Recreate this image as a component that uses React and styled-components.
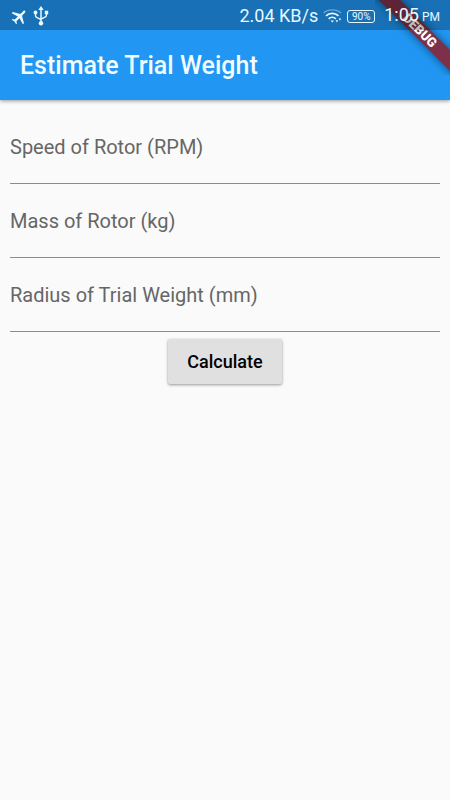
import { useState } from "react";
import styled, { createGlobalStyle, ThemeProvider } from "styled-components";
import { MdAirplanemodeActive } from "react-icons/md";

const theme = {
  primary: "#2196f3",
  background: "#fafafa",
  label: "#666666",
  line: "#8c8c8c",
  button: "#e0e0e0",
  status: "#e6faff",
};

const GlobalStyle = createGlobalStyle`
  * {
    box-sizing: border-box;
  }
  body {
    margin: 0;
    background: ${theme.background};
    font-family: Roboto, "Liberation Sans", sans-serif;
  }
`;

const Page = styled.div`
  min-height: 100vh;
  background: ${(props) => props.theme.background};
`;

// app bar, it reaches up behind the status bar
const Header = styled.header`
  position: relative;
  background: ${(props) => props.theme.primary};
  box-shadow: 0 1px 4px rgba(0, 0, 0, 0.4);
`;

const StatusBar = styled.div`
  position: relative;
  z-index: 2;
  display: flex;
  align-items: center;
  justify-content: space-between;
  height: 30px;
  padding: 2px 10px 0;
  color: ${(props) => props.theme.status};
  background: rgba(0, 0, 0, 0.25);
`;

const StatusGroup = styled.div`
  display: flex;
  align-items: center;
  gap: ${(props) => props.$gap}px;
`;

const StatusText = styled.span`
  font-size: 18px;
  line-height: 22px;
  white-space: nowrap;
`;

const Clock = styled(StatusText)`
  margin-left: 4px;
`;

const Meridiem = styled.span`
  margin-left: 3px;
  font-size: 12px;
`;

const PlaneIcon = styled(MdAirplanemodeActive)`
  transform: rotate(45deg);
`;

const Battery = styled.span`
  width: 28px;
  border: 1px solid currentColor;
  border-radius: 3px;
  font-size: 10px;
  line-height: 11px;
  text-align: center;
`;

const Title = styled.h1`
  margin: 0;
  padding: 20px;
  color: #f0fcff;
  font-size: 25px;
  font-weight: 500;
  line-height: 30px;
  padding-top: 21px;
  padding-bottom: 19px;
`;

const BannerCorner = styled.div`
  position: absolute;
  top: 0;
  right: 0;
  z-index: 1;
  width: 75px;
  height: 75px;
  overflow: hidden;
  pointer-events: none;
`;

const Banner = styled.div`
  position: absolute;
  top: 23px;
  left: -15px;
  width: 120px;
  height: 15px;
  color: white;
  background: #7d3049;
  box-shadow: 0 0 8px rgba(0, 0, 0, 0.5);
  font-size: 13px;
  font-weight: 900;
  line-height: 15px;
  text-align: center;
  transform: rotate(45deg);
`;

const Form = styled.form`
  display: flex;
  flex-direction: column;
  padding: 10px;
`;

const Field = styled.div`
  display: grid;
  height: 74px;
`;

const Input = styled.input`
  grid-area: 1 / 1;
  width: 100%;
  padding: 12px 0 0;
  border: none;
  border-bottom: 1px solid ${(props) => props.theme.line};
  border-radius: 0;
  outline: none;
  background: transparent;
  font-family: inherit;
  font-size: 20px;
  &:focus {
    border-color: ${(props) => props.theme.primary};
  }
`;

// the label moves up as soon as the field is in use
const Label = styled.label`
  grid-area: 1 / 1;
  align-self: center;
  color: ${(props) => props.theme.label};
  font-size: 20px;
  line-height: 24px;
  pointer-events: none;
  ${Input}:focus + &,
  ${Input}:not(:placeholder-shown) + & {
    align-self: start;
    font-size: 15px;
  }
`;

const Button = styled.button`
  align-self: center;
  height: 45px;
  margin-top: 7px;
  padding: 0 19px;
  border: none;
  border-radius: 2px;
  color: black;
  background: ${(props) => props.theme.button};
  box-shadow: 0 1px 3px rgba(0, 0, 0, 0.4);
  font-family: inherit;
  font-size: 18px;
  font-weight: 500;
`;

function UsbIcon() {
  return (
    <svg width="16" height="20" viewBox="0 0 16 20" fill="none" stroke="currentColor">
      <path d="M8 3v14" strokeWidth="1.5" />
      <path d="M2.5 7v2.5c0 1.2.8 2 2 2.4L8 13.500M13.500 7v2c0 1.200-.8 2-2 2.400L8 13" strokeWidth="1.4" />
      <path d="M8 0l2.700 4H5.300z" fill="currentColor" stroke="none" />
      <circle cx="2.5" cy="6.5" r="1.9" fill="currentColor" stroke="none" />
      <path d="M11.800 4.800h3.400v3.400h-3.400z" fill="currentColor" stroke="none" />
      <circle cx="8" cy="17.2" r="2.2" fill="currentColor" stroke="none" />
    </svg>
  );
}

function WifiIcon() {
  return (
    <svg width="19" height="16" viewBox="0 0 19 16" fill="none" stroke="currentColor">
      <path d="M.6 5C5 .8 13.500 .8 18 5" strokeWidth="1.3" opacity=".4" />
      <path d="M3 7.800C6.500 4.500 12 4.500 15.500 7.800" strokeWidth="1.7" />
      <path d="M5.700 10.800C7.700 9 10.800 9 12.800 10.800" strokeWidth="1.7" />
      <path d="M7.500 12.400h3.600L9.300 14.600z" fill="currentColor" stroke="none" />
      <path d="M12.600 12.200h2.600l-1.300 2.200zM15.600 10.600h2.600l-1.300 2.200z" fill="currentColor" stroke="none" />
    </svg>
  );
}

const fields = [
  { name: "speed", label: "Speed of Rotor (RPM)" },
  { name: "mass", label: "Mass of Rotor (kg)" },
  { name: "radius", label: "Radius of Trial Weight (mm)" },
];

export default function App() {
  const [values, setValues] = useState({ speed: "", mass: "", radius: "" });

  const handleChange = (e) => {
    setValues({ ...values, [e.target.name]: e.target.value });
  };

  return (
    <ThemeProvider theme={theme}>
      <GlobalStyle />
      <Page>
        <Header>
          <StatusBar>
            <StatusGroup $gap={4}>
              <PlaneIcon size={19} />
              <UsbIcon />
            </StatusGroup>
            <StatusGroup $gap={5}>
              <StatusText>2.04 KB/s</StatusText>
              <WifiIcon />
              <Battery>90%</Battery>
              <Clock>
                1:05<Meridiem>PM</Meridiem>
              </Clock>
            </StatusGroup>
          </StatusBar>
          <BannerCorner>
            <Banner>DEBUG</Banner>
          </BannerCorner>
          <Title>Estimate Trial Weight</Title>
        </Header>
        <Form onSubmit={(e) => e.preventDefault()}>
          {fields.map((field) => (
            <Field key={field.name}>
              <Input
                id={field.name}
                name={field.name}
                inputMode="decimal"
                placeholder=" "
                value={values[field.name]}
                onChange={handleChange}
              />
              <Label htmlFor={field.name}>{field.label}</Label>
            </Field>
          ))}
          <Button type="submit">Calculate</Button>
        </Form>
      </Page>
    </ThemeProvider>
  );
}
